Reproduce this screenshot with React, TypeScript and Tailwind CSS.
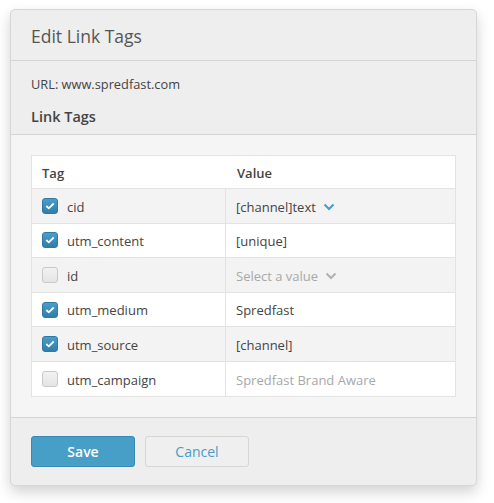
const rows = [
    { tag: 'cid', value: '[channel]text', checked: true, dropdown: true, muted: false },
    { tag: 'utm_content', value: '[unique]', checked: true, dropdown: false, muted: false },
    { tag: 'id', value: 'Select a value', checked: false, dropdown: true, muted: true },
    { tag: 'utm_medium', value: 'Spredfast', checked: true, dropdown: false, muted: false },
    { tag: 'utm_source', value: '[channel]', checked: true, dropdown: false, muted: false },
    { tag: 'utm_campaign', value: 'Spredfast Brand Aware', checked: false, dropdown: false, muted: true },
];

const Chevron = ({ color }: { color: string }) => (
    <svg width="12" height="8" viewBox="0 0 12 8" className="ml-[7px]">
        <path d="M1.5 1.5 L6 6 L10.5 1.5" fill="none" stroke={color} strokeWidth="2" />
    </svg>
);

const Checkbox = ({ checked }: { checked: boolean }) =>
    checked ? (
        <div className="flex h-4 w-4 items-center justify-center rounded-[3px] border border-[#2e7aa3] bg-gradient-to-b from-[#4a9dcb] to-[#2f7eab]">
            <svg width="10" height="8" viewBox="0 0 10 8">
                <path d="M1.3 4 L3.8 6.3 L8.7 1.5" fill="none" stroke="#ffffff" strokeWidth="1.8" />
            </svg>
        </div>
    ) : (
        <div className="h-4 w-4 rounded-[3px] border border-[#c9c9c9] bg-gradient-to-b from-[#f2f2f2] to-[#e4e4e4]" />
    );

const App = () => {
    return (
        <div className="h-[503px] w-[494px] bg-white pl-[10px] pt-[9px] font-['Open_Sans',sans-serif] text-[#444]">
            <div className="w-[467px] overflow-hidden rounded-[5px] border border-[#d6d6d6] bg-[#eeeeee] shadow-[0_6px_14px_rgba(0,0,0,0.18)]">
                <div className="flex h-[51px] items-center border-b border-[#d4d4d4] px-5 pt-[3px]">
                    <h2 className="text-[17.5px] text-[#555]">Edit Link Tags</h2>
                </div>
                <div className="flex h-[74px] flex-col border-b border-[#d4d4d4] px-5 pt-[14px]">
                    <div className="text-[12.8px] text-[#444]">URL: www.spredfast.com</div>
                    <div className="mt-[12px] text-[14.5px] font-semibold text-[#444]">Link Tags</div>
                </div>
                <div className="bg-[#f5f5f5] px-5 py-5">
                    <div className="border border-[#e3e3e3] bg-white text-[13px]">
                        <div className="flex h-[32px] items-center pt-[3px] font-semibold text-[#444]">
                            <div className="w-[194px] pl-[10px]">Tag</div>
                            <div className="pl-[11px]">Value</div>
                        </div>
                        {rows.map((row, i) => (
                            <div
                                key={row.tag}
                                className={`flex h-[34.6px] border-t border-[#e3e3e3] ${i % 2 === 0 ? 'bg-[#f3f3f3]' : 'bg-white'}`}
                            >
                                <div className="flex w-[194px] items-center border-r border-[#e3e3e3] pl-[10px]">
                                    <Checkbox checked={row.checked} />
                                    <span className="ml-[9px] pt-[3px] text-[#444]">{row.tag}</span>
                                </div>
                                <div className="flex items-center pl-[10px] pt-[3px]">
                                    <span className={row.muted ? 'text-[#a8a8a8]' : 'text-[#444]'}>{row.value}</span>
                                    {row.dropdown && <Chevron color={row.muted ? '#b0b0b0' : '#4a9cc8'} />}
                                </div>
                            </div>
                        ))}
                    </div>
                </div>
                <div className="flex gap-[10px] border-t border-[#d4d4d4] px-5 pb-[18px] pt-[18px]">
                    <button className="h-[31px] w-[104px] rounded-[3px] border border-[#3a89b5] bg-[#479ec6] pt-[1px] text-[14px] font-semibold text-white">
                        Save
                    </button>
                    <button className="h-[31px] w-[104px] rounded-[3px] border border-[#d6d6d6] bg-[#efefef] pt-[1px] text-[14px] text-[#4a9cc8]">
                        Cancel
                    </button>
                </div>
            </div>
        </div>
    );
};

export default App;
